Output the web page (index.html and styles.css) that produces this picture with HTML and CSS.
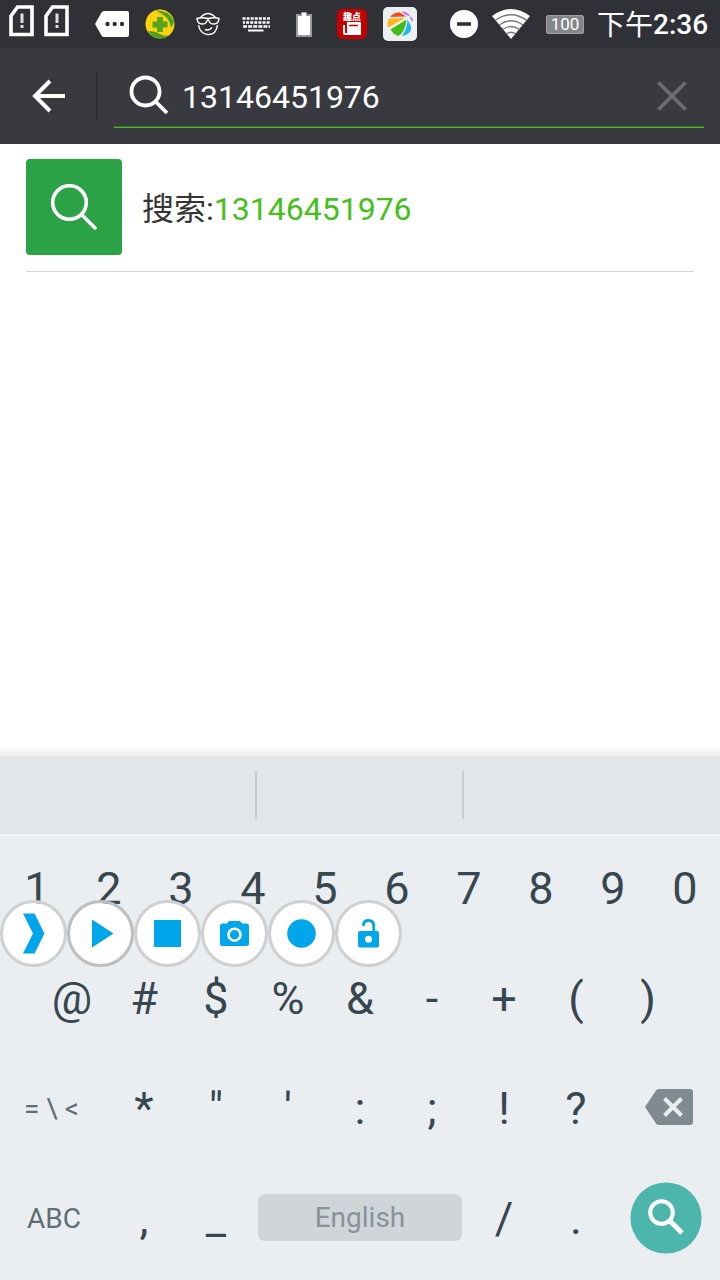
FILE: index.html
```html
<!DOCTYPE html>
<html lang="zh-CN">
<head>
<meta charset="utf-8">
<title>搜索</title>
<link rel="stylesheet" href="styles.css">
</head>
<body>
<div class="screen">
  <header class="status">
    <svg class="sim" width="25" height="32" viewBox="0 0 25 32"><path d="M8.500 2H23v27.500H2V11z" fill="none" stroke="#fff" stroke-width="3.600"/><path d="M13 8.500v9.500M13 20v3" stroke="#ddd" stroke-width="3"/></svg>
    <svg class="sim2" width="25" height="32" viewBox="0 0 25 32"><path d="M8.500 2H23v27.500H2V11z" fill="none" stroke="#fff" stroke-width="3.600"/><path d="M13 8.500v9.500M13 20v3" stroke="#ddd" stroke-width="3"/></svg>
    <svg class="more" width="34" height="26" viewBox="0 0 34 26"><path d="M9 0H32a2 2 0 0 1 2 2V24a2 2 0 0 1-2 2H9Q7.500 26 6.500 24.500L0 13 6.500 1.500Q7.500 0 9 0z" fill="#fff"/><g fill="#303136"><circle cx="12.500" cy="13" r="2.200"/><circle cx="19.700" cy="13" r="2.200"/><circle cx="27" cy="13" r="2.200"/></g></svg>
    <svg class="guard" width="30" height="30" viewBox="0 0 30 30"><circle cx="15" cy="15" r="14.500" fill="#fcd20c"/><path d="M10 1.500Q25 1 29 12Q28 17 26 19Q25 7 10 1.500z" fill="#4c9f25"/><path d="M3 22Q10 22 15 25T24 26Q18 31 10 28.500Q5 26 3 22z" fill="#4c9f25"/><path d="M12 8h6v4.500h4.500v6H18V23h-6v-4.500H7.500v-6H12z" fill="#56a51d"/></svg>
    <svg class="face" width="24" height="24" viewBox="0 0 24 24" fill="none" stroke="#fff" stroke-width="1.500"><path d="M4.500 5.500Q12-2.500 19.500 5.500M2.500 13Q4 22 12 22.500T21.500 13M9 17.500Q13 19 16 15.500"/><path d="M1 6.500Q6 5 12 6.500Q18 5 23 6.500Q22.500 12 18 12T13 8.500Q12 7.500 11 8.500Q10.500 12 6 12T1 6.500z"/></svg>
    <svg class="kbd" width="28" height="15" viewBox="0 0 28 15" fill="none" stroke="#fff"><path d="M.5 1.500H28" stroke-width="2.500" stroke-dasharray="3 1.100"/><path d="M1 5.500H28" stroke-width="2.500" stroke-dasharray="3 1.100" stroke-dashoffset="1"/><path d="M1 9.500H28" stroke-width="2.500" stroke-dasharray="4 1.100"/><path d="M6 13.500H21.500" stroke-width="2"/></svg>
    <svg class="cell" width="16" height="25" viewBox="0 0 16 25"><path d="M0 2H5V0h6v2h5v23H0z" fill="#9a9a9c"/><path d="M2 4H6V1h4v3h4v19H2z" fill="#fff"/></svg>
    <div class="news"><span>趣点</span><svg width="18" height="14" viewBox="0 0 18 14"><path d="M4 0h14v13H2Q0 13 0 11V3h2v8h2z" fill="#fff"/><path d="M6 3.500h9" stroke="#c00" stroke-width="1.500"/></svg></div>
    <svg class="cam" width="34" height="34" viewBox="0 0 34 34"><rect width="34" height="34" rx="5" fill="#eceff2"/><path d="M7 10Q11 5 17 5.500L23 9.500z" fill="#fa4918"/><path d="M4.500 19Q4 13 6.500 11.500L22 11 5.500 20.500z" fill="#fdb71b"/><path d="M7.500 22.500L23.500 12.500Q22 26 15 29Q10 27 7.500 22.500z" fill="#42bd18"/><path d="M24.500 13Q29 19 28 23T19 29Q24 22 24.500 13z" fill="#20b6ef"/><path d="M18.500 4.500Q24 4 27 9Q23 9 18.500 4.500zM27 9.500Q30 10 30 14.500Q27 13 27 9.500z" fill="#cf6cf0"/></svg>
    <svg class="dnd" width="28" height="28" viewBox="0 0 28 28"><circle cx="14" cy="14" r="14" fill="#fff"/><path d="M7 14H21" stroke="#303136" stroke-width="3.600"/></svg>
    <svg class="wifi" width="40" height="30" viewBox="0 0 40 30"><path d="M1 7Q20-7 39 7L20 30z" fill="#fff"/><g fill="none" stroke="#77787c" stroke-width="1.300"><path d="M4 11.500Q20 0 36 11.500M8 16Q20 7.500 32 16M11.500 20.500Q20 14.500 28.500 20.500M15 25Q20 21.500 25 25"/></g></svg>
    <div class="level">100</div>
    <div class="clock"><span>下午</span><b>2:36</b></div>
  </header>

  <div class="topbar">
    <svg class="back" width="34" height="34" viewBox="0 0 34 34" fill="none" stroke="#fff" stroke-width="4"><path d="M18 2L3 17 18 32M2.500 17H33"/></svg>
    <div class="sep"></div>
    <div class="field">
      <svg class="glass" width="40" height="40" viewBox="0 0 40 40" fill="none" stroke="#fff" stroke-width="3.800"><circle cx="16.500" cy="16.500" r="14"/><path d="M26 26L38 38"/></svg>
      <span class="query">13146451976</span>
      <svg class="clear" width="30" height="30" viewBox="0 0 30 30"><path d="M1.500 1.500L28.500 28.500M28.500 1.500L1.500 28.500" stroke="#6b6c70" stroke-width="3.800"/></svg>
    </div>
  </div>

  <main class="results">
    <div class="result">
      <div class="tile"><svg width="96" height="96" viewBox="0 0 96 96" fill="none" stroke="#fff" stroke-width="3.600"><circle cx="43.500" cy="43.500" r="16.800"/><path d="M55.500 55.500L70 70"/></svg></div>
      <div class="label">搜索:<span>13146451976</span></div>
    </div>
  </main>

  <section class="keyboard">
    <div class="strip"><i></i><i></i><i></i></div>
    <div class="keys">
      <div class="row ten"><span>1</span><span>2</span><span>3</span><span>4</span><span>5</span><span>6</span><span>7</span><span>8</span><span>9</span><span>0</span></div>
      <div class="row nine"><span>@</span><span>#</span><span>$</span><span>%</span><span>&amp;</span><span>-</span><span>+</span><span>(</span><span>)</span></div>
      <div class="row sym"><span class="small alt">= \ &lt;</span><span>*</span><span>"</span><span>'</span><span>:</span><span>;</span><span>!</span><span>?</span>
        <span class="del"><svg width="48" height="36" viewBox="0 0 48 36"><path d="M14 0H45a3 3 0 0 1 3 3V33a3 3 0 0 1-3 3H14Q12 36 11 34.500L0 18 11 1.500Q12 0 14 0z" fill="#7f8b90"/><path d="M19.500 9.500L36.500 26.500M36.500 9.500L19.500 26.500" stroke="#ebeef1" stroke-width="4"/></svg></span></div>
      <div class="row bottom"><span class="small">ABC</span><span>,</span><span>_</span><span class="space">English</span><span>/</span><span>.</span>
        <span class="enter"><svg width="72" height="72" viewBox="0 0 72 72"><circle cx="36" cy="36" r="35.600" fill="#4db6ac"/><g fill="none" stroke="#fff"><circle cx="31.500" cy="30.500" r="11.300" stroke-width="4"/><path d="M40 39L52 51" stroke-width="5"/></g></svg></span></div>
    </div>
  </section>

  <div class="bubbles">
    <div class="bubble"><svg width="61" height="61" viewBox="-.5 -.5 61 61"><path d="M19.500 10H31L41 30 31 50H19.500L29.500 30z"/></svg></div>
    <div class="bubble active"><svg width="61" height="61" viewBox="-.5 -.5 61 61"><path d="M21.500 16L43 30 21.500 44z"/></svg></div>
    <div class="bubble"><svg width="61" height="61" viewBox="-.5 -.5 61 61"><path d="M16.500 16.500h27v27h-27z"/></svg></div>
    <div class="bubble"><svg width="61" height="61" viewBox="-.5 -.5 61 61"><path d="M18 20h4.500l2-2.500h11l2 2.500H42a2.500 2.500 0 0 1 2.500 2.500V40a2.500 2.500 0 0 1-2.500 2.500H18a2.500 2.500 0 0 1-2.500-2.500V22.500A2.500 2.500 0 0 1 18 20z"/><circle cx="30" cy="31.200" r="6" fill="none" stroke="#fff" stroke-width="2.600"/></svg></div>
    <div class="bubble"><svg width="61" height="61" viewBox="-.5 -.5 61 61"><circle cx="30" cy="30" r="14.300"/></svg></div>
    <div class="bubble"><svg width="61" height="61" viewBox="-.5 -.5 61 61"><path d="M25 22.500V21.500Q25 17 30 17T35.200 22V28" fill="none" stroke="#00a6ea" stroke-width="2.800"/><rect x="19.500" y="27.500" width="21" height="16.500" rx="2"/><circle cx="30" cy="35.800" r="3.500" fill="#fff"/></svg></div>
  </div>
</div>
</body>
</html>
```
FILE: styles.css
```css
* { box-sizing: border-box; }
body { margin: 0; font-family: Roboto, "Noto Sans CJK SC", sans-serif; }
svg { display: block; flex: none; }
.screen { position: relative; width: 720px; height: 1280px; display: flex; flex-direction: column; background: #fff; overflow: hidden; }

.status { height: 48px; display: flex; align-items: center; background: #303136; color: #fff; }
.sim { margin: -7px 0 0 9px; }
.sim2 { margin: -7px 0 0 10px; }
.more { margin-left: 26px; }
.guard { margin-left: 16px; }
.face { margin-left: 21px; }
.kbd { margin-left: 22px; }
.cell { margin-left: 26px; }
.news { margin-left: 25px; width: 30px; height: 30px; border-radius: 6px; background: #c90000; display: flex; flex-direction: column; align-items: center; padding-top: 3px; }
.news span { font-size: 9px; line-height: 10px; font-weight: 900; white-space: nowrap; }
.cam { margin-left: 16px; }
.dnd { margin-left: 33px; }
.wifi { margin-left: 13px; }
.level { margin-left: 15px; width: 38px; height: 19px; border: 1px solid #a0a0a3; border-radius: 2px; background: #85868a; font-size: 17px; line-height: 17px; text-align: center; }
.clock { margin-left: 13px; display: flex; font-size: 28px; line-height: 48px; white-space: nowrap; padding-top: 2px; }
.clock span { padding-top: 1px; }
.clock b { font-weight: 500; }

.topbar { height: 96px; display: flex; align-items: center; background: #393a3f; color: #fff; }
.back { margin-left: 32px; }
.sep { margin-left: 30px; width: 2px; height: 48px; background: #2e2f33; }
.field { align-self: flex-start; margin: 15px 0 0 16px; width: 590px; height: 65px; border-bottom: 1px solid #45c01a; box-shadow: inset 0 -1px #3d6b32; display: flex; align-items: center; }
.glass { margin: 0 0 0 15px; }
.query { margin-left: 13px; font-size: 32px; line-height: 38px; padding-top: 4px; }
.clear { margin: 2px 17px 0 auto; }

.results { flex: 1; padding: 0 26px; }
.result { height: 128px; display: flex; align-items: center; border-bottom: 1px solid #d9d9d9; }
.tile { width: 96px; height: 96px; border-radius: 4px; background: #2ba245; margin-top: -1px; }
.label { margin-left: 20px; font-size: 32px; line-height: 38px; color: #353535; padding-top: 2px; }
.label span { color: #45c01a; }

.keyboard { height: 534px; padding-top: 10px; background: linear-gradient(#fff, #eee 8px, #eee 10px, #ebeef1 10px); }
.strip { height: 80px; display: flex; align-items: flex-start; padding-top: 15px; background: #e2e6e9; border-bottom: 2px solid #f5f7f8; }
.strip i { height: 48px; width: 207px; border-right: 2px solid #cacdd0; }
.strip i:first-child { width: 257px; }
.strip i:last-child { border: 0; }
.keys { margin-top: -2px; display: grid; grid-template-rows: repeat(4, 110px); color: #37474f; font-size: 45px; }
.row { display: grid; align-items: center; justify-items: center; line-height: 52px; }
.ten { grid-template-columns: repeat(10, 72px); padding-left: 1px; }
.nine { grid-template-columns: repeat(9, 72px); padding-left: 36px; }
.sym { grid-template-columns: 108px repeat(7, 72px) 108px; }
.bottom { grid-template-columns: 108px 72px 72px 216px 72px 72px 108px; }
.small { font-size: 28px; color: #5f6e74; }
.alt { margin-right: 5px; }
.del { padding-left: 6px; }
.del svg { margin-top: -5px; }
.space { width: 204px; height: 47px; margin-top: -4px; border-radius: 7px; background: #d0d5d8; color: #87939a; font-size: 28px; line-height: 47px; text-align: center; }
.enter { margin-top: -2px; }

.bubbles { position: absolute; left: 0; top: 900px; display: flex; }
.bubble { width: 67px; height: 67px; border-radius: 50%; border: 3px solid #cfd0d2; background: #fff; background-clip: padding-box; fill: #00a6ea; }
.active { border-color: #bdbebf; }
```
